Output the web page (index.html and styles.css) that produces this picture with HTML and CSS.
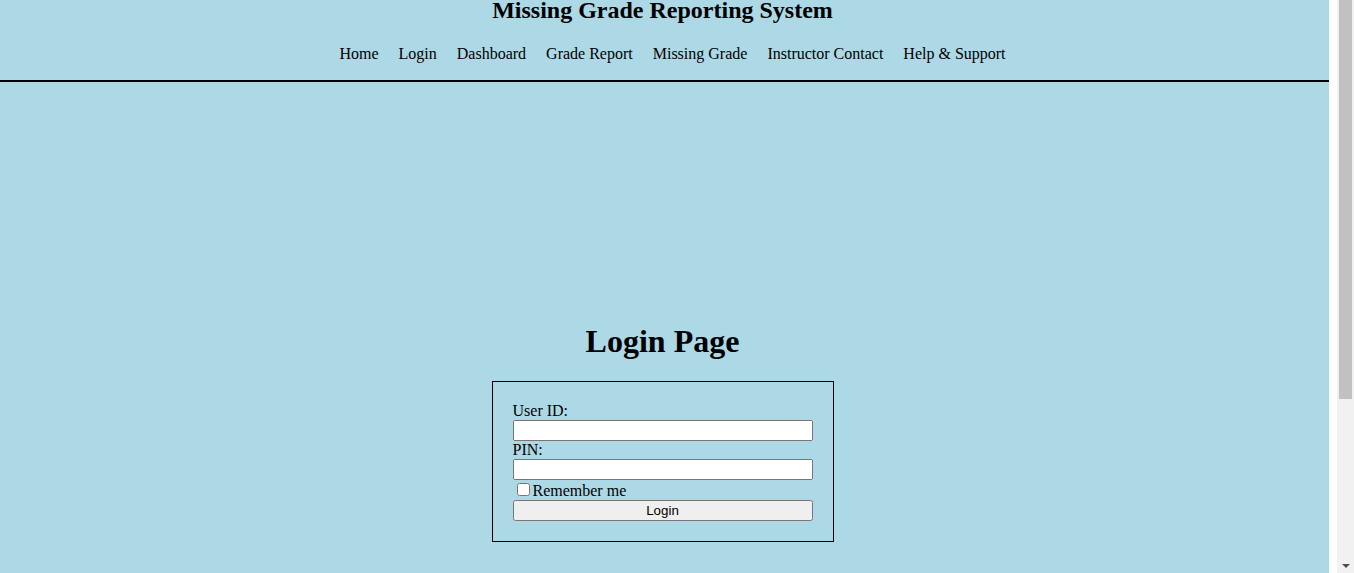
FILE: index.html
```html
<!DOCTYPE html>
<html lang="en">
<head>
<meta charset="utf-8">
<title>Login - Missing Grade Reporting System</title>
<link rel="stylesheet" href="styles.css">
</head>
<body>
<div class="page">
  <header class="site-header">
    <h2 class="site-title">Missing Grade Reporting System</h2>
    <nav>
      <ul class="nav">
        <li><a href="#">Home</a></li>
        <li><a href="#">Login</a></li>
        <li><a href="#">Dashboard</a></li>
        <li><a href="#">Grade Report</a></li>
        <li><a href="#">Missing Grade</a></li>
        <li><a href="#">Instructor Contact</a></li>
        <li><a href="#">Help &amp; Support</a></li>
      </ul>
    </nav>
  </header>
  <main class="content">
    <h1 class="page-title">Login Page</h1>
    <form class="login-form">
      <label class="field-label" for="userid">User ID:</label>
      <input class="field-input" type="text" id="userid">
      <label class="field-label" for="pin">PIN:</label>
      <input class="field-input" type="password" id="pin">
      <div class="remember-row">
        <input type="checkbox" id="remember"><label for="remember">Remember me</label>
      </div>
      <button class="login-btn" type="submit">Login</button>
    </form>
  </main>
</div>
<div class="scrollbar" aria-hidden="true">
  <div class="scrollbar-thumb"></div>
  <div class="scrollbar-arrow"></div>
</div>
</body>
</html>
```

FILE: styles.css
```css
html, body {
  margin: 0;
  padding: 0;
  background: #ffffff;
}

body {
  font-family: "Liberation Serif", "Times New Roman", serif;
  font-size: 16px;
  color: #000;
}

.page {
  background: #add8e6;
  margin-right: 25px;
  padding-right: 4px;
  padding-bottom: 300px;
}

.site-header {
  text-align: center;
  border-bottom: 2px solid #000;
  margin-right: -4px;
  padding-right: 4px;
  padding-bottom: 17px;
}

.site-title {
  font-size: 24px;
  font-weight: bold;
  margin: -3px 0 21px;
}

.nav {
  list-style: none;
  margin: 0;
  padding: 0 0 0 40px;
  display: flex;
  justify-content: center;
}

.nav li {
  margin-right: 20px;
}

.nav a {
  color: #000;
  text-decoration: none;
}

.content {
  text-align: center;
  padding-top: 219px;
}

.page-title {
  font-size: 32px;
  font-weight: bold;
  margin: 22px 0 21px;
}

.login-form {
  width: 300px;
  margin: 0 auto;
  padding: 20px;
  border: 1px solid #000;
  text-align: left;
}

.field-label {
  display: block;
}

.field-input {
  display: block;
  width: 100%;
  box-sizing: border-box;
  margin: 0;
}

.login-btn {
  display: block;
  width: 100%;
  box-sizing: border-box;
  margin: 0;
}

/* imitation of the browser's vertical scrollbar seen in the reference */
.scrollbar {
  position: fixed;
  top: 0;
  right: 0;
  width: 17px;
  height: 100vh;
  background: #f1f1f1;
}

.scrollbar-thumb {
  margin: 0 2px;
  height: 399px;
  background: #c1c1c1;
}

.scrollbar-arrow {
  position: absolute;
  left: 5px;
  bottom: 5px;
  width: 0;
  height: 0;
  border-left: 4px solid transparent;
  border-right: 4px solid transparent;
  border-top: 4px solid #505050;
}
```
